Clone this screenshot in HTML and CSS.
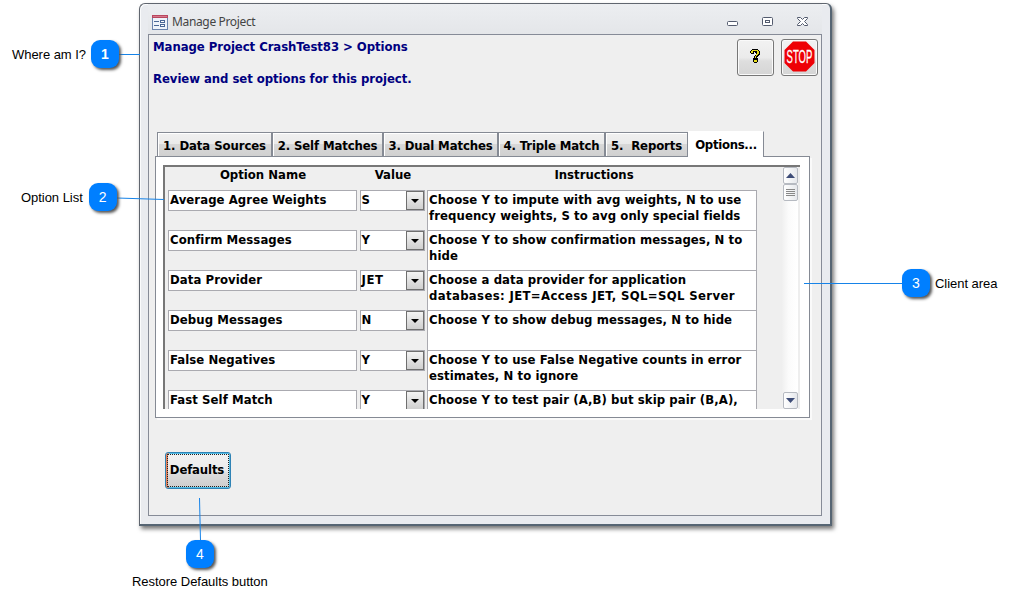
FILE: index.html
```html
<!DOCTYPE html>
<html lang="en">
<head>
<meta charset="utf-8">
<title>Manage Project</title>
<link rel="stylesheet" href="styles.css">
</head>
<body>
<main class="window">
  <header class="titlebar">
    <svg class="form-icon" width="16" height="15" viewBox="0 0 16 15" shape-rendering="crispEdges">
      <rect width="16" height="15" fill="#6b84ad"/><rect x="1" y="3" width="14" height="11" fill="#eef3fa"/>
      <rect width="16" height="3" fill="#b9475f"/><rect x="1" y="1" width="14" height="1" fill="#d6788b"/>
      <path d="M2 6.500h5M2 10.500h5" stroke="#4b6896"/><path d="M8.500 5.500h4v2h-4zM8.500 9.500h4v2h-4z" fill="#fff" stroke="#4b6896"/>
    </svg>
    <h1 class="title">Manage Project</h1>
    <svg class="controls" width="84" height="12" viewBox="0 0 84 12" fill="#fff" stroke="#535b6e">
      <rect x="1.500" y="5.500" width="10" height="4" rx="1"/>
      <rect x="36.500" y="1.500" width="10" height="8" rx="1"/><rect x="39.500" y="4.500" width="4" height="2"/>
      <path d="M71.500 1.500h3l2 2 2-2h3v1l-3 3 3 3v1h-3l-2-2-2 2h-3v-1l3-3-3-3z"/>
    </svg>
  </header>
  <section class="client">
    <div class="top">
      <div class="heading"><p>Manage Project CrashTest83 &gt; Options</p><p>Review and set options for this project.</p></div>
      <button class="tool">
        <svg width="12" height="16" viewBox="0 0 12 16" shape-rendering="crispEdges"><path d="M3 1h6v1h1v1h1v4h-1v1h-1v1h-1v1h1v4h-1v1H5v-1H4v-4h1V8h1V7h1V5H6V4H5v2H2V5H1V3h1V2h1z"/><path d="M3 2h6v1h1v3H9v1H8v1H7v2H6V8h1V6h1V3H4v2H2V3h1zM5 12h3v2H5z" fill="#e6dc1c"/></svg>
      </button>
      <button class="tool">
        <svg width="31" height="31" viewBox="0 0 31 31"><path d="M9 .5h13l8.500 8.500v13L22 30.500H9L.5 22V9z" fill="#ee0005"/><text transform="translate(15.500 21.500) scale(.53 1)" text-anchor="middle" fill="#fff" class="stop">STOP</text></svg>
      </button>
    </div>
    <nav class="tabs">
      <a class="tab t1">1. Data Sources</a><a class="tab t2">2. Self Matches</a><a class="tab t3">3. Dual Matches</a><a class="tab t4">4. Triple Match</a><a class="tab t5">5.&nbsp; Reports</a><a class="tab active">Options...</a>
    </nav>
    <div class="panel">
      <div class="list">
        <div class="sheet">
          <div class="cols"><span>Option Name</span><span>Value</span><span>Instructions</span></div>
          <div class="row"><div class="name">Average Agree Weights</div><div class="value">S<i class="drop"></i></div><div class="info">Choose Y to impute with avg weights, N to use<br>frequency weights, S to avg only special fields</div></div>
          <div class="row"><div class="name">Confirm Messages</div><div class="value">Y<i class="drop"></i></div><div class="info">Choose Y to show confirmation messages, N to<br>hide</div></div>
          <div class="row"><div class="name">Data Provider</div><div class="value"><span class="code">JET</span><i class="drop"></i></div><div class="info">Choose a data provider for application<br><span class="caps">databases: JET=Access JET, SQL=SQL Server</span></div></div>
          <div class="row"><div class="name">Debug Messages</div><div class="value">N<i class="drop"></i></div><div class="info">Choose Y to show debug messages, N to hide</div></div>
          <div class="row"><div class="name">False Negatives</div><div class="value">Y<i class="drop"></i></div><div class="info">Choose Y to use False Negative counts in error<br>estimates, N to ignore</div></div>
          <div class="row"><div class="name">Fast Self Match</div><div class="value">Y<i class="drop"></i></div><div class="info">Choose Y to test pair (A,B) but skip pair (B,A),</div></div>
        </div>
        <div class="scroll">
          <div class="sbtn"><svg width="9" height="5" viewBox="0 0 9 5"><path d="M0 5L4.500 0 9 5z" fill="#3d4c77"/></svg></div>
          <div class="sbtn"><svg width="9" height="8" viewBox="0 0 9 8"><path d="M0 .5h9M0 2.500h9M0 4.500h9M0 6.500h9" stroke="#888"/></svg></div>
          <div class="sbtn last"><svg width="9" height="5" viewBox="0 0 9 5"><path d="M0 0h9L4.500 5z" fill="#3d4c77"/></svg></div>
        </div>
      </div>
    </div>
    <button class="defaults">Defaults</button>
  </section>
</main>
<svg class="lines" width="1013" height="605" stroke="#1683e8" fill="none"><path d="M119 54.500H140M117 198L164 199.500M804 283.500H903M199.500 498L200.500 541"/></svg>
<div class="callout c1"><span class="label">Where am I?</span><b>1</b></div>
<div class="callout c2"><span class="label">Option List</span><b>2</b></div>
<div class="callout c3"><b>3</b><span class="label">Client area</span></div>
<div class="callout c4"><b>4</b><span class="label">Restore Defaults button</span></div>
</body>
</html>
```
FILE: styles.css
```css
* { box-sizing: border-box; }
body { margin: 0; padding: 3px 0 0 139px; width: 1013px; height: 605px; overflow: hidden; background: #fff; font-family: "Liberation Sans", sans-serif; position: relative; }
p, h1 { margin: 0; }
button { padding: 0; }
svg { display: block; flex: none; }

.window { width: 693px; height: 523px; border: 1px solid #60666f; border-right: 2px solid #566573; border-bottom: 2px solid #566573; border-radius: 6px 6px 0 0; background: #e9ebef; padding: 0 8px; box-shadow: inset 1px 1px #fafbfc, 2px 3px 4px #777; }
.titlebar { height: 30px; display: flex; align-items: center; padding: 6px 5px 0 4px; background: linear-gradient(#eceef1, #e4e6e9); }
.title { flex: 1; margin-left: 4px; font: 12px/16px "Noto Sans", sans-serif; letter-spacing: -.35px; color: #444; }
.controls { margin-right: 7px; }
.client { width: 674px; height: 482px; border: 1px solid #868b97; background: #efefef; padding: 4px 3px 0 6px; font: bold 13px/16px "DejaVu Sans Condensed", "DejaVu Sans", sans-serif; font-stretch: condensed; color: #000; }

.top { height: 92px; display: flex; align-items: flex-start; gap: 7px; }
.heading { flex: 1; color: #000080; display: flex; flex-direction: column; gap: 16px; margin-left: -2px; letter-spacing: -.06px; }
.tool { width: 37px; height: 37px; border: 1px solid #777; border-radius: 3px; background: linear-gradient(#f2f2f2, #ebebeb 50%, #dedede 60%, #d5d5d5); display: flex; align-items: center; justify-content: center; box-shadow: inset 0 0 0 1px #fafafa; }
.tool:nth-child(2) svg { margin: -3px 0 0 -1px; }
.tool:nth-child(3) svg { margin-top: -2px; }
.stop { font: 18px "Liberation Sans", sans-serif; stroke: #fff; stroke-width: .3px; }

.tabs { height: 25px; display: flex; align-items: flex-end; padding-left: 2px; position: relative; }
.tab { height: 24px; border: 1px solid #858a94; border-width: 1px 1px 0 1px; background: linear-gradient(#f1f1f1, #eaeaea 46%, #d8d8d8 48%, #d0d0d0); box-shadow: inset 1px 1px #fff; padding-top: 5px; text-align: center; white-space: nowrap; letter-spacing: -.12px; }
.tab:first-child { letter-spacing: -.08px; }
.t1 { width: 115px; } .t2 { width: 111px; } .t3 { width: 115px; } .t4 { width: 107px; } .t5 { width: 83px; }
.active { width: 76px; height: 26px; margin-bottom: -1px; background: #fff; border-color: #fff #858a94 #fff #fff; box-shadow: none; letter-spacing: -.3px; }

.panel { width: 655px; height: 262px; border: 1px solid #858a94; background: #fff; padding: 8px 0 0 7px; box-shadow: 2px 2px #fafafa; }
.list { width: 637px; height: 244px; border: solid #777; border-width: 2px 0 0 2px; background: #efefef; display: flex; overflow: hidden; }
.sheet { flex: 1; padding-left: 3px; }
.cols { height: 23px; display: grid; grid-template-columns: 190px 70px 332px; text-align: center; }
.row { height: 40px; display: grid; grid-template-columns: 189px 65px 330px; column-gap: 2.500px; align-items: start; letter-spacing: .08px; }
.name, .value { height: 21px; border: 1px solid #aaaab0; background: #fff; padding: 1px; }
.name { letter-spacing: .07px; }
.value { display: flex; justify-content: space-between; padding-right: 0; }
.code { letter-spacing: .6px; }
.caps { letter-spacing: .35px; }
.drop { width: 18px; height: 19px; margin-top: -1px; border: 1px solid #6f6f6f; background: linear-gradient(#f3f3f3, #cfcfcf); display: grid; place-items: center; }
.drop::after { content: ""; border: 4px solid transparent; border-top-color: #000; border-bottom: 0; }
.info { height: 41px; border: 1px solid #aaaab0; background: #fff; padding: 1px; white-space: nowrap; }
.scroll { width: 19px; padding-right: 1px; display: flex; flex-direction: column; background: linear-gradient(90deg, #eee, #fbfbfb 40%, #fff 87%, #eee 88%); }
.sbtn { width: 15px; height: 17px; margin-left: 2px; border: 1px solid #b6bac1; border-radius: 2px; background: linear-gradient(90deg, #fff, #e6e8ec); display: grid; place-items: center; }
.last { margin-top: auto; }
.defaults { margin: 34px 0 0 10px; width: 66px; height: 37px; padding: 0 2px 2px 0; border: 1px solid #2f83b5; border-radius: 3px; outline: 1px dotted #222; outline-offset: -3px; background: linear-gradient(#f2f2f2, #ebebeb 50%, #dcdcdc 60%, #cdcdcd); box-shadow: inset 2px 0 #e8835c, inset 0 0 0 1px #55bde6; font: inherit; letter-spacing: -.15px; }

.lines { position: absolute; left: 0; top: 0; }
.callout { position: absolute; display: flex; align-items: center; gap: 5px; font-size: 13px; line-height: 16px; color: #000; white-space: nowrap; }
.label { padding-top: 2px; letter-spacing: -.04px; }
.callout b { width: 28px; height: 28px; border-radius: 9px; background: #007fff; color: #fff; text-align: center; font: 14px/28px "Liberation Sans", sans-serif; box-shadow: 2px 2px 3px #555; }
.callout.c1 b { font-weight: bold; }
.c1 { left: 12px; top: 40px; }
.c2 { left: 21px; top: 183px; gap: 6px; }
.c3 { left: 902px; top: 269px; }
.c4 { left: 132px; top: 540px; flex-direction: column; gap: 4px; }
```
